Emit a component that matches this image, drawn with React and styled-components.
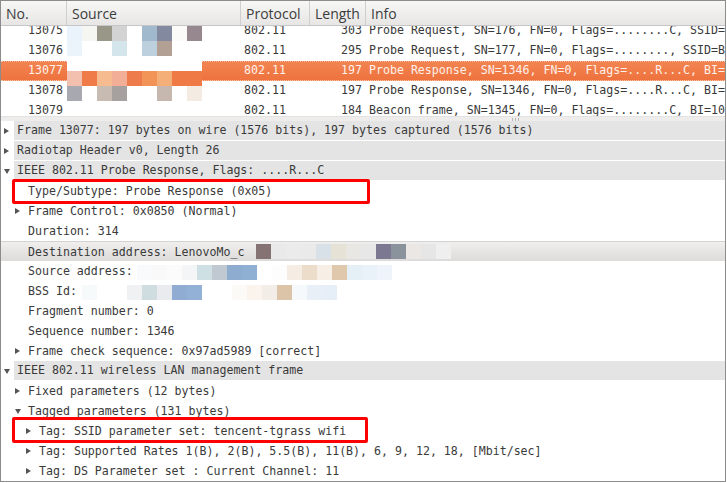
import styled, { createGlobalStyle } from "styled-components";

const GlobalStyle = createGlobalStyle`
  html, body {
    margin: 0;
    padding: 0;
    background: #ffffff;
  }
`;

const MONO = `"DejaVu Sans Mono", "Liberation Mono", monospace`;
const TEXT = "#3a3a3a";

const columns = [
  { key: "no", title: "No.", width: 66 },
  { key: "source", title: "Source", width: 174 },
  { key: "protocol", title: "Protocol", width: 69 },
  { key: "length", title: "Length", width: 56 },
  { key: "info", title: "Info", width: 0 },
];

const packets = [
  { no: 13075, protocol: "802.11", length: 303, info: "Probe Request, SN=176, FN=0, Flags=........C, SSID=Broadcast" },
  { no: 13076, protocol: "802.11", length: 295, info: "Probe Request, SN=177, FN=0, Flags=........, SSID=Broadcast" },
  { no: 13077, protocol: "802.11", length: 197, info: "Probe Response, SN=1346, FN=0, Flags=....R...C, BI=100", selected: true },
  { no: 13078, protocol: "802.11", length: 197, info: "Probe Response, SN=1346, FN=0, Flags=....R...C, BI=100" },
  { no: 13079, protocol: "802.11", length: 184, info: "Beacon frame, SN=1345, FN=0, Flags=........C, BI=100" },
];

// redacted source column, 15px blocks
const sourceMosaic = [
  ["#eaf2fb", "#f5f6f1", "#999888", "#d3d3d3", "#ffffff", "#a0b9cd", "#838aa0", "#fbfaf8", "#978890"],
  ["#ebf3fb", "#ffffff", "#ffffff", "#d4e5ec", "#ffffff", "#bdd0de", "#b3a094", "#ffffff", "#ffffff"],
  ["#ffffff", "#ffffff", "#ffffff", "#ffffff", "#ffffff", "#ffffff", "#ffffff", "#ffffff", "#ffffff"],
  ["#f3bfae", "#ef7b48", "#f6bc8f", "#f3ae97", "#ee7b4b", "#f29358", "#f4ae78", "#ef7a45", "#ef7a45"],
  ["#a8a8b0", "#ffffff", "#c8bcb2", "#a6a19e", "#ffffff", "#ffffff", "#c6b8ae", "#ffffff", "#f4ebe3"],
  ["#ffffff", "#ffffff", "#ffffff", "#ffffff", "#ffffff", "#ffffff", "#ffffff", "#ffffff", "#ffffff"],
];

const tree = [
  { level: 1, arrow: "right", head: true, text: "Frame 13077: 197 bytes on wire (1576 bits), 197 bytes captured (1576 bits)" },
  { level: 1, arrow: "right", head: true, text: "Radiotap Header v0, Length 26" },
  { level: 1, arrow: "down", head: true, text: "IEEE 802.11 Probe Response, Flags: ....R...C" },
  { level: 2, text: "Type/Subtype: Probe Response (0x05)" },
  { level: 2, arrow: "right", text: "Frame Control: 0x0850 (Normal)" },
  { level: 2, text: "Duration: 314" },
  {
    level: 2,
    focused: true,
    text: "Destination address: LenovoMo_c",
    mosaic: {
      x: 255,
      top: 2,
      colors: ["#857272", "#e9e9e9", "#ebebeb", "#eaeaea", "#d8e1e8", "#e6e2d6", "#e8e7e4", "#e7e7e7", "#7c7892", "#8a939c", "#ebe7e5", "#e6e6e6", "#efefef"],
    },
  },
  {
    level: 2,
    text: "Source address:",
    mosaic: {
      x: 136,
      top: 4,
      colors: ["#f8fafb", "#f9f9f9", "#fbfbfb", "#f3f5f6", "#cfe0e4", "#c0c8d1", "#8eabd0", "#8fb0d3", "#ffffff", "#fdfdfd", "#f5ece3", "#ecdcca", "#f7efe6", "#e0c8ac", "#e5f0f6", "#e8f2f8", "#eef4f9"],
    },
  },
  {
    level: 2,
    text: "BSS Id:",
    mosaic: {
      x: 81,
      top: 4,
      colors: ["#f7fafa", "#ffffff", "#ffffff", "#f0f1f3", "#cfdde0", "#e9ebef", "#91acd3", "#93b0d6", "#ffffff", "#ffffff", "#fcfaf7", "#fbf4ec", "#f3ede7", "#dcc4a8", "#f5f9fc", "#e8eff6", "#e6eef7"],
    },
  },
  { level: 2, text: "Fragment number: 0" },
  { level: 2, text: "Sequence number: 1346" },
  { level: 2, arrow: "right", text: "Frame check sequence: 0x97ad5989 [correct]" },
  { level: 1, arrow: "down", head: true, text: "IEEE 802.11 wireless LAN management frame" },
  { level: 2, arrow: "right", text: "Fixed parameters (12 bytes)" },
  { level: 2, arrow: "down", text: "Tagged parameters (131 bytes)" },
  { level: 3, arrow: "right", text: "Tag: SSID parameter set: tencent-tgrass wifi" },
  { level: 3, arrow: "right", text: "Tag: Supported Rates 1(B), 2(B), 5.5(B), 11(B), 6, 9, 12, 18, [Mbit/sec]" },
  { level: 3, arrow: "right", text: "Tag: DS Parameter set : Current Channel: 11" },
];

const highlights = [
  { left: 11, top: 58, width: 358, height: 25 },
  { left: 11, top: 296, width: 356, height: 26 },
];

function Mosaic({ rows }) {
  return (
    <MosaicGrid>
      {rows.map((row, i) => (
        <MosaicRow key={i}>
          {row.map((c, j) => (
            <Block key={j} $color={c} />
          ))}
        </MosaicRow>
      ))}
    </MosaicGrid>
  );
}

function App() {
  return (
    <>
      <GlobalStyle />
      <Window>
        <Header>
          {columns.map((col) => (
            <HeadCell key={col.key} $width={col.width}>
              {col.title}
            </HeadCell>
          ))}
        </Header>

        <ListBody>
          <ListScroll>
            {packets.map((p) => (
              <PacketRow key={p.no} $selected={p.selected}>
                <Cell $width={66} $align="right">{p.no}</Cell>
                <Cell $width={174} />
                <Cell $width={69}>{p.protocol}</Cell>
                <Cell $width={56} $align="right">{p.length}</Cell>
                <Cell>{p.info}</Cell>
              </PacketRow>
            ))}
          </ListScroll>
          <SourceRedaction>
            <Mosaic rows={sourceMosaic} />
          </SourceRedaction>
        </ListBody>

        <Splitter>
          <Grip>
            <span />
            <span />
            <span />
          </Grip>
        </Splitter>

        <TreePane>
          {tree.map((node, i) => (
            <TreeRow key={i} $level={node.level} $focused={node.focused}>
              <Expander>{node.arrow && <Arrow $dir={node.arrow} />}</Expander>
              <Label $head={node.head}>{node.text}</Label>
              {node.mosaic && (
                <InlineRedaction $x={node.mosaic.x} $top={node.mosaic.top}>
                  <Mosaic rows={[node.mosaic.colors]} />
                </InlineRedaction>
              )}
            </TreeRow>
          ))}
          {highlights.map((h, i) => (
            <RedBox
              key={i}
              style={{ left: h.left, top: h.top, width: h.width, height: h.height }}
            />
          ))}
        </TreePane>
      </Window>
    </>
  );
}

const Window = styled.div`
  width: 726px;
  height: 482px;
  box-sizing: border-box;
  border: 1px solid #8c8c8c;
  display: flex;
  flex-direction: column;
  overflow: hidden;
  background: #ffffff;
`;

const Header = styled.div`
  display: flex;
  height: 25px;
  flex-shrink: 0;
  box-sizing: border-box;
  border-bottom: 1px solid #c6c6c6;
  background: linear-gradient(#f7f7f6, #e7e6e5);
`;

const HeadCell = styled.div`
  ${(p) => (p.$width ? `width: ${p.$width}px;` : "flex: 1;")}
  box-sizing: border-box;
  padding-left: 5px;
  border-right: 1px solid #cfcfcf;
  font-family: "Open Sans", "Noto Sans", sans-serif;
  font-size: 14px;
  line-height: 25px;
  color: #3c3c3c;
  white-space: nowrap;
  &:last-child {
    border-right: none;
  }
`;

const ListBody = styled.div`
  position: relative;
  height: 90px;
  flex-shrink: 0;
  overflow: hidden;
`;

const ListScroll = styled.div`
  margin-top: -5px;
`;

const PacketRow = styled.div`
  display: flex;
  height: 20px;
  box-sizing: border-box;
  font-family: ${MONO};
  font-size: 11.6px;
  line-height: 19px;
  color: ${(p) => (p.$selected ? "#fff1ea" : TEXT)};
  background: ${(p) =>
    p.$selected ? "linear-gradient(#f28452, #ee723d)" : "#ffffff"};
  ${(p) =>
    p.$selected &&
    `
    border-top: 1px dotted #f8c3a6;
    border-bottom: 1px dotted #f8c3a6;
    line-height: 17px;
  `}
`;

const Cell = styled.div`
  ${(p) => (p.$width ? `width: ${p.$width}px;` : "flex: 1;")}
  box-sizing: border-box;
  text-align: ${(p) => p.$align || "left"};
  padding: ${(p) => (p.$align === "right" ? "0 4px 0 0" : "0 0 0 3px")};
  white-space: nowrap;
  overflow: hidden;
`;

const SourceRedaction = styled.div`
  position: absolute;
  left: 66px;
  top: 0;
`;

const MosaicGrid = styled.div`
  display: flex;
  flex-direction: column;
`;

const MosaicRow = styled.div`
  display: flex;
`;

const Block = styled.div`
  width: 15px;
  height: 15px;
  background: ${(p) => p.$color};
`;

const Splitter = styled.div`
  height: 5px;
  flex-shrink: 0;
  box-sizing: border-box;
  background: #eeedec;
  border-top: 1px solid #e2e2e2;
  display: flex;
  align-items: center;
`;

const Grip = styled.div`
  display: flex;
  gap: 2px;
  margin-left: 511px;
  span {
    width: 1px;
    height: 3px;
    background: #b8b8b8;
  }
`;

const TreePane = styled.div`
  position: relative;
  flex: 1;
  font-family: ${MONO};
  font-size: 11.6px;
  color: ${TEXT};
`;

const TreeRow = styled.div`
  position: relative;
  display: flex;
  height: 20px;
  box-sizing: border-box;
  padding-left: ${(p) => 1 + (p.$level - 1) * 11}px;
  ${(p) =>
    p.$focused &&
    `
    background: linear-gradient(#f0efee, #dcdbda);
    border-top: 1px solid #d2d2d2;
  `}
`;

const Expander = styled.div`
  width: 12px;
  flex-shrink: 0;
  display: flex;
  align-items: center;
  padding-left: 2px;
  box-sizing: border-box;
`;

const Arrow = styled.div`
  width: 0;
  height: 0;
  ${(p) =>
    p.$dir === "down"
      ? `
    border-left: 3.5px solid transparent;
    border-right: 3.5px solid transparent;
    border-top: 5px solid #555555;
  `
      : `
    border-top: 3.5px solid transparent;
    border-bottom: 3.5px solid transparent;
    border-left: 5px solid #555555;
  `}
`;

const Label = styled.div`
  flex: 1;
  padding-left: 3px;
  height: ${(p) => (p.$head ? "19px" : "auto")};
  line-height: ${(p) => (p.$head ? "19px" : "20px")};
  background: ${(p) => (p.$head ? "#e4e4e4" : "transparent")};
  white-space: nowrap;
  overflow: hidden;
`;

const InlineRedaction = styled.div`
  position: absolute;
  left: ${(p) => p.$x}px;
  top: ${(p) => p.$top}px;
`;

const RedBox = styled.div`
  position: absolute;
  box-sizing: border-box;
  border: 3px solid #ff0000;
  border-radius: 2px;
  pointer-events: none;
`;

export default App;
